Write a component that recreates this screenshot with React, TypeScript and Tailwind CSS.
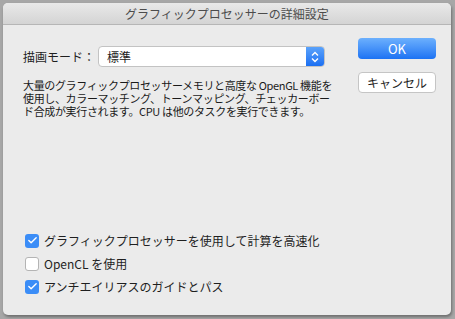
import { Check } from "lucide-react";

const font = { fontFamily: '"Noto Sans CJK JP", "Noto Sans", sans-serif' };

function Checkbox({ checked, label }: { checked: boolean; label: string }) {
  return (
    <label className="flex items-center gap-[5px] h-[23px]">
      {checked ? (
        <span className="flex items-center justify-center w-[14px] h-[14px] rounded-[3px] bg-[#3b8df7]">
          <Check className="w-[11px] h-[11px] text-white" strokeWidth={3} />
        </span>
      ) : (
        <span className="w-[14px] h-[14px] rounded-[3px] bg-white border border-[#b4b4b4]" />
      )}
      <span className="text-[12px] text-[#1f1f1f]">{label}</span>
    </label>
  );
}

export default function App() {
  return (
    <div className="w-[455px] h-[319px] bg-[#a7a7a7] pt-[3px] pl-[3px]" style={font}>
      <div className="w-[448px] h-[312px] rounded-[5px] bg-[#ebebeb] flex flex-col overflow-hidden shadow-[1px_2px_3px_rgba(0,0,0,0.35)]">
        {/* title bar */}
        <div className="h-[22px] shrink-0 flex items-center justify-center bg-gradient-to-b from-[#e9e9e9] to-[#d4d4d4] border-b border-[#b6b6b6]">
          <span className="text-[12px] text-[#4c4c4c]">グラフィックプロセッサーの詳細設定</span>
        </div>

        <div className="flex-1 flex flex-col pl-[20px] pr-[15px] pb-[17px]">
          <div className="flex">
            <div className="flex-1 pt-[21px]">
              <div className="flex items-center">
                <span className="text-[12px] text-[#1f1f1f] w-[75px]">描画モード：</span>
                <div className="w-[227px] h-[21px] flex rounded-[4px] bg-white border border-[#c3c3c3] overflow-hidden">
                  <span className="flex-1 pl-[8px] text-[12px] leading-[19px] text-[#1f1f1f]">標準</span>
                  <span className="w-[18px] flex flex-col items-center justify-center bg-gradient-to-b from-[#5aa2fb] to-[#1a6ff2]">
                    <svg width="8" height="12" viewBox="0 0 8 12" fill="none" stroke="white" strokeWidth="1.4">
                      <path d="M1 4.5 L4 1.5 L7 4.5" />
                      <path d="M1 7.5 L4 10.5 L7 7.5" />
                    </svg>
                  </span>
                </div>
              </div>
              <p className="mt-[12px] text-[11px] leading-[13px] tracking-[-0.35px] text-[#1a1a1a]">
                大量のグラフィックプロセッサーメモリと高度な OpenGL 機能を<br />
                使用し、カラーマッチング、トーンマッピング、チェッカーボー<br />
                ド合成が実行されます。CPU は他のタスクを実行できます。
              </p>
            </div>
            <div className="w-[78px] pt-[13px] flex flex-col gap-[13px]">
              <button className="h-[21px] rounded-[4px] bg-gradient-to-b from-[#6cb0fd] to-[#1b72f3] text-white text-[13px] leading-[21px]">
                OK
              </button>
              <button className="h-[21px] rounded-[4px] bg-white border border-[#c5c5c5] text-[12px] text-[#1f1f1f]">
                キャンセル
              </button>
            </div>
          </div>

          <div className="mt-auto flex flex-col pl-[2px]">
            <Checkbox checked label="グラフィックプロセッサーを使用して計算を高速化" />
            <Checkbox checked={false} label="OpenCL を使用" />
            <Checkbox checked label="アンチエイリアスのガイドとパス" />
          </div>
        </div>
      </div>
    </div>
  );
}
